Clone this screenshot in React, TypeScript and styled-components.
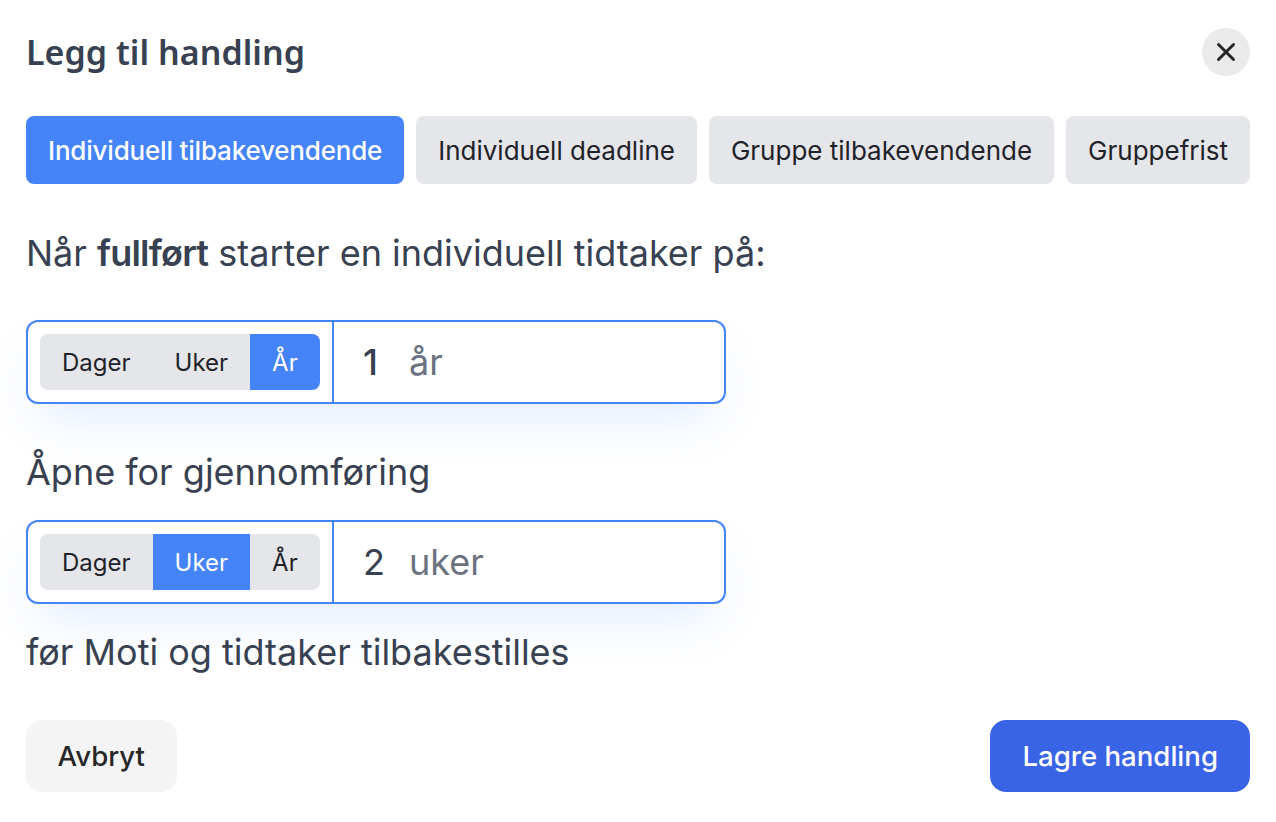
import styled, { createGlobalStyle } from 'styled-components'

const GlobalStyle = createGlobalStyle`
  html, body {
    margin: 0;
    padding: 0;
    background: #fff;
    font-family: Inter, "Liberation Sans", sans-serif;
  }
  * { box-sizing: border-box; }
`

const Modal = styled.div`
  width: 1276px;
  height: 822px;
  padding: 28px 26px 30px;
  display: flex;
  flex-direction: column;
`

const Header = styled.header`
  display: flex;
  align-items: center;
  justify-content: space-between;
  height: 48px;
  margin-bottom: 40px;
`

const Title = styled.h1`
  margin: 0;
  font-family: "Noto Sans", sans-serif;
  font-size: 34px;
  font-weight: 600;
  letter-spacing: 0.03px;
  color: #374151;
`

const CloseButton = styled.button`
  width: 48px;
  height: 48px;
  padding: 0;
  border: none;
  border-radius: 50%;
  background: #ebebeb;
  color: #262626;
  display: flex;
  align-items: center;
  justify-content: center;
`

const Tabs = styled.div`
  display: flex;
  justify-content: space-between;
  margin-bottom: 49px;
`

const Tab = styled.button<{ $active?: boolean }>`
  height: 68px;
  padding: 0 22px;
  border: none;
  border-radius: 8px;
  font-family: inherit;
  font-size: 26px;
  font-weight: ${(p) => (p.$active ? 500 : 400)};
  letter-spacing: ${(p) => (p.$active ? '-0.19px' : '0')};
  white-space: nowrap;
  background: ${(p) => (p.$active ? '#4483f8' : '#e5e6ea')};
  color: ${(p) => (p.$active ? '#fff' : '#1f2229')};
`

const Text = styled.p<{ $mt?: number }>`
  margin: ${(p) => p.$mt ?? 0}px 0 0;
  font-size: 36px;
  line-height: 40px;
  color: #374151;
`

const Strong = styled.strong`
  font-weight: 600;
  letter-spacing: -0.8px;
`

const Field = styled.div<{ $mt: number }>`
  margin-top: ${(p) => p.$mt}px;
  width: 700px;
  height: 84px;
  display: flex;
  border: 2px solid #4483f8;
  border-radius: 12px;
  background: #fff;
  box-shadow: 0 25px 50px -12px rgba(68, 131, 248, 0.16);
`

const UnitCell = styled.div`
  width: 306px;
  padding: 12px 12px;
  border-right: 2px solid #4483f8;
  flex: none;
`

const Segments = styled.div`
  display: flex;
  height: 56px;
  border-radius: 8px;
  overflow: hidden;
  background: #e5e6ea;
`

const Segment = styled.button<{ $active: boolean }>`
  height: 100%;
  padding: 0 22px;
  border: none;
  font-family: inherit;
  font-size: 24px;
  background: ${(p) => (p.$active ? '#4483f8' : 'transparent')};
  color: ${(p) => (p.$active ? '#fff' : '#1f2229')};
`

const ValueCell = styled.div`
  flex: 1;
  display: flex;
  align-items: center;
  padding-left: 29px;
  font-size: 36px;
`

const Value = styled.span<{ $medium?: boolean }>`
  width: 46px;
  text-align: left;
  font-weight: ${(p) => (p.$medium ? 500 : 400)};
  color: #374151;
`

const Unit = styled.span`
  color: #6b7280;
`

const Footer = styled.footer`
  margin-top: 48px;
  display: flex;
  justify-content: space-between;
`

const Action = styled.button<{ $primary?: boolean }>`
  height: 72px;
  padding: 0 ${(p) => (p.$primary ? 32 : 31.5)}px;
  border: none;
  border-radius: 16px;
  font-family: inherit;
  font-size: 27.6px;
  font-weight: 500;
  background: ${(p) => (p.$primary ? '#3a64e6' : '#f4f4f4')};
  color: ${(p) => (p.$primary ? '#fff' : '#262626')};
`

const units = ['Dager', 'Uker', 'År']

const DurationField = ({ active, value, unit, medium, mt }: { active: string; value: string; unit: string; medium?: boolean; mt: number }) => (
  <Field $mt={mt}>
    <UnitCell>
      <Segments>
        {units.map((u) => (
          <Segment key={u} $active={u === active}>
            {u}
          </Segment>
        ))}
      </Segments>
    </UnitCell>
    <ValueCell>
      <Value $medium={medium}>{value}</Value>
      <Unit>{unit}</Unit>
    </ValueCell>
  </Field>
)

export default function App() {
  return (
    <>
      <GlobalStyle />
      <Modal>
        <Header>
          <Title>Legg til handling</Title>
          <CloseButton aria-label="Lukk">
            <svg width="20" height="20" viewBox="0 0 20 20" fill="none" stroke="currentColor" strokeWidth="3" strokeLinecap="round">
              <path d="M2.5 2.5l15 15M17.5 2.5l-15 15" />
            </svg>
          </CloseButton>
        </Header>
        <Tabs>
          <Tab $active>Individuell tilbakevendende</Tab>
          <Tab>Individuell deadline</Tab>
          <Tab>Gruppe tilbakevendende</Tab>
          <Tab>Gruppefrist</Tab>
        </Tabs>
        <Text>
          Når <Strong>fullført</Strong> starter en individuell tidtaker på:
        </Text>
        <DurationField mt={47} active="År" value="1" unit="år" medium />
        <Text $mt={48}>Åpne for gjennomføring</Text>
        <DurationField mt={28} active="Uker" value="2" unit="uker" />
        <Text $mt={28}>før Moti og tidtaker tilbakestilles</Text>
        <Footer>
          <Action>Avbryt</Action>
          <Action $primary>Lagre handling</Action>
        </Footer>
      </Modal>
    </>
  )
}
